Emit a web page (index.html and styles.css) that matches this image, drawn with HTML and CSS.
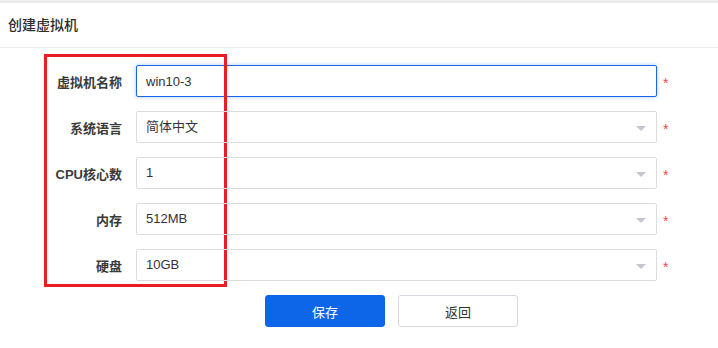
FILE: index.html
```html
<!DOCTYPE html>
<html lang="zh-CN">
<head>
  <meta charset="UTF-8" />
  <meta name="viewport" content="width=device-width, initial-scale=1" />
  <title>创建虚拟机</title>
  <link rel="stylesheet" href="styles.css">
</head>
<body>
  <div class="topbar"></div>
  <div class="panel-head">创建虚拟机</div>

  <form class="vm-form">
    <div class="mark"></div>

    <div class="row">
      <label class="lbl" for="vmName">虚拟机名称</label>
      <input class="field focus" id="vmName" type="text" value="win10-3" />
      <span class="req">*</span>
    </div>

    <div class="row">
      <label class="lbl">系统语言</label>
      <div class="field select">简体中文<i class="arrow"></i></div>
      <span class="req">*</span>
    </div>

    <div class="row">
      <label class="lbl">CPU核心数</label>
      <div class="field select">1<i class="arrow"></i></div>
      <span class="req">*</span>
    </div>

    <div class="row">
      <label class="lbl">内存</label>
      <div class="field select">512MB<i class="arrow"></i></div>
      <span class="req">*</span>
    </div>

    <div class="row">
      <label class="lbl">硬盘</label>
      <div class="field select">10GB<i class="arrow"></i></div>
      <span class="req">*</span>
    </div>

    <div class="actions">
      <button type="button" class="btn primary">保存</button>
      <button type="button" class="btn">返回</button>
    </div>
  </form>
</body>
</html>
```

FILE: styles.css
```css
body {
  margin: 0;
  background: #fff;
  color: #333;
  font-family: "Liberation Sans", "Noto Sans CJK SC", sans-serif;
  font-size: 13px;
}
.topbar {
  height: 3px;
  background: #ebebeb;
}
.panel-head {
  height: 44px;
  line-height: 44px;
  padding-left: 8px;
  font-size: 14px;
  font-weight: 500;
  color: #2e2e2e;
  border-bottom: 1px solid #ebebeb;
}
.vm-form {
  position: relative;
  padding-top: 17px;
}
.mark {
  position: absolute;
  left: 44px;
  top: 6px;
  width: 177px;
  height: 227px;
  border: 3px solid #ec1c24;
}
.row {
  display: flex;
  align-items: center;
  height: 32px;
  margin-bottom: 14px;
}
.lbl {
  flex: none;
  width: 136px;
  padding-right: 14px;
  box-sizing: border-box;
  text-align: right;
  font-weight: 600;
  color: #3a3a3a;
}
.field {
  flex: none;
  width: 521px;
  height: 32px;
  box-sizing: border-box;
  border: 1px solid #dcdcdc;
  border-radius: 2px;
  padding: 0 9px;
  font: inherit;
  color: #333;
  line-height: 30px;
}
.field.focus {
  border-color: #1a66e8;
  box-shadow: 0 0 4px rgba(26, 102, 232, 0.35);
  outline: none;
}
.select {
  position: relative;
}
.arrow {
  position: absolute;
  right: 10px;
  top: 14px;
  border-left: 5px solid transparent;
  border-right: 5px solid transparent;
  border-top: 5px solid #c4c6cf;
}
.req {
  margin-left: 6px;
  color: #f5484b;
  font-size: 14px;
  padding-top: 4px;
}
.actions {
  display: flex;
  gap: 13px;
  padding-left: 265px;
  margin-top: 1px;
}
.btn {
  width: 120px;
  height: 32px;
  border: 1px solid #d6d8e2;
  border-radius: 3px;
  background: #fff;
  color: #333;
  font: inherit;
  cursor: pointer;
}
.btn.primary {
  background: #0d66e8;
  border-color: #0d66e8;
  color: #fff;
}
```
